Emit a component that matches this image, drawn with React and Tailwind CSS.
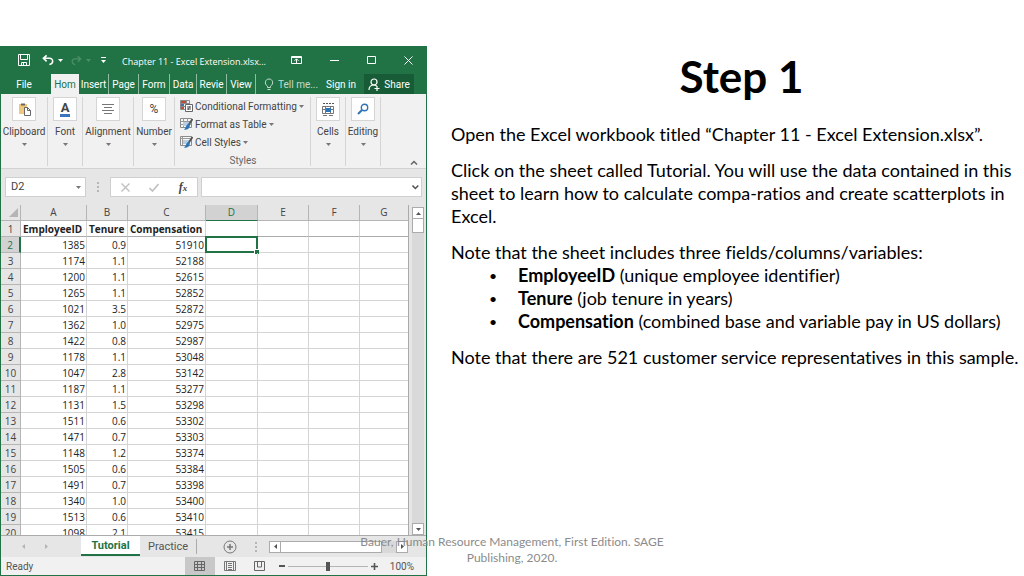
import { useState } from "react"

const rows = [
    ["1385", "0.9", "51910"],
    ["1174", "1.1", "52188"],
    ["1200", "1.1", "52615"],
    ["1265", "1.1", "52852"],
    ["1021", "3.5", "52872"],
    ["1362", "1.0", "52975"],
    ["1422", "0.8", "52987"],
    ["1178", "1.1", "53048"],
    ["1047", "2.8", "53142"],
    ["1187", "1.1", "53277"],
    ["1131", "1.5", "53298"],
    ["1511", "0.6", "53302"],
    ["1471", "0.7", "53303"],
    ["1148", "1.2", "53374"],
    ["1505", "0.6", "53384"],
    ["1491", "0.7", "53398"],
    ["1340", "1.0", "53400"],
    ["1513", "0.6", "53410"],
    ["1098", "2.1", "53415"],
]

const tabs = [
    { name: "Insert", width: "w-[30px]" },
    { name: "Page", width: "w-[30px]" },
    { name: "Form", width: "w-[31px]" },
    { name: "Data", width: "w-[27px]" },
    { name: "Revie", width: "w-[30px]" },
    { name: "View", width: "w-[29px]" },
]

const Caret = ({ className = "" }) => (
    <svg className={`shrink-0 ${className}`} width="5" height="3" viewBox="0 0 5 3" fill="currentColor" aria-hidden="true">
        <path d="M0 0h5L2.5 3z" />
    </svg>
)

const TitleBar = () => (
    <div className="flex h-7 items-center bg-[#217346] pl-[17px] text-white">
        <button aria-label="Save">
            <svg width="12" height="12" viewBox="0 0 12 12" fill="none" stroke="currentColor">
                <path d="M.5.5h11v11H.5zM2.5.5v5h7v-5M3.5 11.500v-3h5v3M5.500 9v2" />
            </svg>
        </button>
        <button aria-label="Undo" className="ml-3 flex items-center gap-1">
            <svg width="12" height="12" viewBox="0 0 13 12" fill="none" stroke="currentColor" strokeWidth="1.700">
                <path d="M5 1L1.500 4.200 5 7.500M1.500 4.200H8c5 0 4.500 6 0 6.600" />
            </svg>
            <Caret />
        </button>
        <button aria-label="Redo" className="ml-2 flex items-center gap-1 text-[#4c8f69]">
            <svg width="11" height="11" viewBox="0 0 13 12" fill="none" stroke="currentColor" strokeWidth="1.500">
                <path d="M8 1l3.500 3.200L8 7.500M11.500 4.200H5c-5 0-4.500 6 0 6.600" />
            </svg>
            <Caret />
        </button>
        <button aria-label="Customize toolbar" className="ml-[10px]">
            <svg width="5" height="6" viewBox="0 0 5 6" fill="currentColor">
                <path d="M0 0h5v1H0zM0 3h5L2.500 6z" />
            </svg>
        </button>
        <span className="ml-4 flex-1 pt-1 font-['Open_Sans',sans-serif] text-[9px] whitespace-nowrap">Chapter 11 - Excel Extension.xlsx...</span>
        <div className="flex items-center gap-7 pr-[13px]">
            <button aria-label="Ribbon display options">
                <svg width="11" height="8" viewBox="0 0 11 8" fill="none" stroke="currentColor">
                    <path d="M.5.5h10v7H.5zM.5 1.500h10M5.500 7V3M3.500 4.800l2-2 2 2" />
                </svg>
            </button>
            <button aria-label="Minimize">
                <svg width="9" height="8" viewBox="0 0 9 8" stroke="currentColor">
                    <path d="M0 4.500h9" />
                </svg>
            </button>
            <button aria-label="Maximize">
                <svg width="9" height="8" viewBox="0 0 9 8" fill="none" stroke="currentColor">
                    <path d="M.5.5h8v7h-8z" />
                </svg>
            </button>
            <button aria-label="Close">
                <svg width="9" height="9" viewBox="0 0 9 9" stroke="currentColor">
                    <path d="M.5.5l8 8M8.500.5l-8 8" />
                </svg>
            </button>
        </div>
    </div>
)

const TabBar = () => (
    <div className="flex h-5 items-stretch bg-[#217346] text-[10px] whitespace-nowrap text-white">
        <button className="w-[50px] pr-1">File</button>
        <button className="w-7 bg-[#f1f1f1] text-[#217346]">Hom</button>
        {tabs.map((tab) => (
            <button key={tab.name} className={`flex shrink-0 items-center justify-center border-r border-[#8fbda2] ${tab.width}`}>
                {tab.name}
            </button>
        ))}
        <button className="ml-2 flex items-center gap-1 text-[#c3dccd]">
            <svg width="10" height="13" viewBox="0 0 10 13" fill="none" stroke="currentColor">
                <path d="M3.500 9.500V8.200C0 6 1 1 5 1s5 5 1.500 7.200v1.300zM3.500 11.500h3" />
            </svg>
            Tell me...
        </button>
        <button className="ml-auto">Sign in</button>
        <button className="mr-3 ml-2 flex w-[50px] items-center justify-center gap-1 bg-[#185c37]">
            <svg width="12" height="13" viewBox="0 0 12 13" fill="none" stroke="currentColor" strokeWidth="1.200">
                <circle cx="6" cy="4" r="3" />
                <path d="M1 12c0-3 2-5 5-5 1 0 2 .4 2.600 1M9 8v5M6.500 10.500h5" />
            </svg>
            Share
        </button>
    </div>
)

const RibbonGroup = ({ label, width, children }) => (
    <button className={`flex h-[69px] shrink-0 flex-col items-center border-r border-[#d5d5d5] ${width}`}>
        <span className="flex size-6 shrink-0 items-center justify-center border border-[#d5d5d5] bg-white">
            {children}
        </span>
        <span className="mt-1 leading-[14px] whitespace-nowrap">{label}</span>
        <Caret className="mt-1 text-[#777]" />
    </button>
)

const StyleIcon = ({ kind }) => (
    <svg width="13" height="12" viewBox="0 0 13 12" fill="none" aria-hidden="true">
        {kind === "conditional" ? (
            <>
                <path d="M.5.5h9v9h-9zM.5 3.500h9M.5 6.500h9M3.500.5v9M6.500.5v9" stroke="#8a8a8a" />
                <path d="M1 1h5v2H1zM1 7h3v2H1z" fill="#c5483b" />
                <path d="M1 4h3v2H1z" fill="#4472a8" />
                <path d="M5.500 4.500h7v7h-7z" fill="#fff" stroke="#666" />
                <path d="M7 7h4M7 9h4M10 6l-2 4" stroke="#555" />
            </>
        ) : (
            <>
                <path d="M.5.5h11v9H.5z" fill="#f7f7f7" stroke="#8a8a8a" />
                <path d={kind === "table" ? "M.5 3.500h11M.5 6.500h11M3.500.5v9M7.500.5v9" : "M.5 2.500h11M2.500.5v9"} stroke="#9a9a9a" />
                <path d="M3 4h6v4H3z" fill="#b7cde4" />
                <path d="M12.500 1L8.500 7" stroke="#555" strokeWidth="2" />
                <path d="M8 6c2 0 2.500 2 1 4-1 1.500-3 2-5 1.500C6 10 6 7 8 6z" fill="#2e75b6" />
            </>
        )}
    </svg>
)

const Ribbon = () => (
    <div className="flex h-[75px] items-start border-b border-[#d2d2d2] bg-[#f1f1f1] pt-[3px] text-[10px] text-[#444]">
        <RibbonGroup label="Clipboard" width="w-[47px]">
            <svg width="13" height="14" viewBox="0 0 13 14" fill="none">
                <path d="M1 2h8v10H1z" fill="#edc87e" />
                <path d="M3 1.500h4v2H3z" fill="#666" />
                <path d="M6.500 5.500h3l3 3v5h-6z" fill="#fff" stroke="#666" />
                <path d="M9.500 5.500v3h3" stroke="#666" />
            </svg>
        </RibbonGroup>
        <RibbonGroup label="Font" width="w-[35px]">
            <span className="border-b-3 border-[#3b76bd] px-px text-[13px] leading-[13px] font-bold">A</span>
        </RibbonGroup>
        <RibbonGroup label="Alignment" width="w-[51px]">
            <svg width="12" height="10" viewBox="0 0 12 10" stroke="#777">
                <path d="M0 .5h12M2 3.500h8M0 6.500h12M2 9.500h8" />
            </svg>
        </RibbonGroup>
        <RibbonGroup label="Number" width="w-[41px]">
            <span className="text-xs">%</span>
        </RibbonGroup>
        <div className="flex h-[69px] min-w-0 flex-1 flex-col border-r border-[#d5d5d5] pl-[5px] whitespace-nowrap">
            <button className="flex h-[18px] shrink-0 items-center gap-[2px]">
                <StyleIcon kind="conditional" />
                Conditional Formatting
                <Caret className="text-[#777]" />
            </button>
            <button className="flex h-[18px] shrink-0 items-center gap-[2px]">
                <StyleIcon kind="table" />
                Format as Table
                <Caret className="text-[#777]" />
            </button>
            <button className="flex h-[18px] shrink-0 items-center gap-[2px]">
                <StyleIcon kind="cell" />
                Cell Styles
                <Caret className="text-[#777]" />
            </button>
            <span className="pr-1 text-center leading-[20px] text-[#666]">Styles</span>
        </div>
        <RibbonGroup label="Cells" width="w-[35px]">
            <svg width="13" height="14" viewBox="0 0 13 14" fill="none">
                <path d="M1 1.500h11" stroke="#555" strokeDasharray="2 1" />
                <path d="M.5 4.500h11v7H.5zM.5 7.500h11M3.500 4.500v7M8.500 4.500v7M1 13.500h4M7 13.500h4" stroke="#777" />
                <path d="M4 6h5v4H4z" fill="#2e75b6" />
            </svg>
        </RibbonGroup>
        <RibbonGroup label="Editing" width="w-[35px]">
            <svg width="12" height="12" viewBox="0 0 12 12" fill="none" stroke="#2e75b6">
                <circle cx="7.500" cy="4.500" r="3.200" strokeWidth="1.400" />
                <path d="M5 7L1 11" strokeWidth="2" />
            </svg>
        </RibbonGroup>
        <button aria-label="Collapse the ribbon" className="flex w-[45px] shrink-0 justify-end self-end pr-2 pb-[3px]">
            <svg width="8" height="5" viewBox="0 0 8 5" fill="none" stroke="#666" strokeWidth="1.500">
                <path d="M1 4.500l3-3 3 3" />
            </svg>
        </button>
    </div>
)

const FormulaBar = () => (
    <div className="flex h-9 items-center bg-[#e6e6e6] px-1 text-[#444]">
        <label className="flex h-5 w-[81px] items-center border border-[#d0d0d0] bg-white pr-1">
            <input aria-label="Name box" defaultValue="D2" className="w-full min-w-0 pl-[5px] text-[11px] outline-none" />
            <Caret className="text-[#777]" />
        </label>
        <svg className="mx-[11px]" width="2" height="10" viewBox="0 0 2 10" fill="#b5b5b5" aria-hidden="true">
            <path d="M0 0h2v2H0zM0 4h2v2H0zM0 8h2v2H0z" />
        </svg>
        <div className="flex h-5 w-[88px] items-center justify-around border border-[#d0d0d0] bg-white">
            <button aria-label="Cancel">
                <svg width="9" height="9" viewBox="0 0 9 9" stroke="#c0c0c0" strokeWidth="1.400">
                    <path d="M.5.5l8 8M8.500.5l-8 8" />
                </svg>
            </button>
            <button aria-label="Enter">
                <svg width="10" height="9" viewBox="0 0 10 9" fill="none" stroke="#c0c0c0" strokeWidth="1.600">
                    <path d="M.5 5l3 3 6-7" />
                </svg>
            </button>
            <button className="font-['Liberation_Serif',serif] text-xs leading-3 font-bold italic">
                f<span className="text-[9px]">x</span>
            </button>
        </div>
        <label className="ml-[3px] flex h-5 flex-1 items-center border border-[#d0d0d0] bg-white pr-[2px]">
            <input aria-label="Formula" className="w-full min-w-0 text-[11px] outline-none" />
            <svg width="7" height="5" viewBox="0 0 7 5" fill="none" stroke="#555" strokeWidth="1.600">
                <path d="M.5.500l3 3 3-3" />
            </svg>
        </label>
    </div>
)

const Sheet = () => (
    <div className="flex h-[330px] overflow-hidden bg-[#e6e6e6]">
        <div className="min-w-0 flex-1 overflow-hidden border-r border-[#ababab]">
            <table className="w-full table-fixed border-separate border-spacing-0 bg-white font-['Open_Sans',sans-serif] text-[10px] leading-[13px] text-[#222]">
                <colgroup>
                    <col className="w-5" />
                    <col className="w-[66px]" />
                    <col className="w-[41px]" />
                    <col className="w-[78px]" />
                    <col className="w-[52px]" />
                    <col className="w-[51px]" />
                    <col className="w-[51px]" />
                    <col />
                </colgroup>
                <thead>
                    <tr className="h-4 bg-[#e6e6e6] text-[#444]">
                        <th className="border-r border-b border-[#b5b5b5] p-0">
                            <svg className="mr-[2px] ml-auto" width="9" height="9" viewBox="0 0 9 9" fill="#b5b5b5" aria-hidden="true">
                                <path d="M9 0v9H0z" />
                            </svg>
                        </th>
                        {["A", "B", "C", "D", "E", "F", "G"].map((letter) => (
                            <th
                                key={letter}
                                className={letter === "D"
                                    ? "border-r border-b border-r-[#b5b5b5] border-b-[#217346] bg-[#d2d2d2] p-0 font-normal text-[#217346]"
                                    : "border-r border-b border-[#b5b5b5] p-0 font-normal last:border-r-0"}
                            >
                                {letter}
                            </th>
                        ))}
                    </tr>
                </thead>
                <tbody>
                    <tr className="h-4 font-bold">
                        <th className="border-r border-b border-[#b5b5b5] bg-[#e6e6e6] p-0 pt-[2px] font-normal text-[#444]">1</th>
                        <td className="border-r border-b border-r-[#d4d4d4] border-b-[#ababab] p-0 pt-[2px] pl-[2px] whitespace-nowrap">EmployeeID</td>
                        <td className="border-r border-b border-r-[#d4d4d4] border-b-[#ababab] p-0 pt-[2px] pl-[2px] whitespace-nowrap">Tenure</td>
                        <td className="border-r border-b border-r-[#d4d4d4] border-b-[#ababab] p-0 pt-[2px] pl-[2px] whitespace-nowrap">Compensation</td>
                        {["D", "E", "F", "G"].map((letter) => (
                            <td key={letter} className="border-r border-b border-r-[#d4d4d4] border-b-[#ababab] p-0 last:border-r-0"></td>
                        ))}
                    </tr>
                    {rows.map((row, index) => (
                        <tr key={row[0]} className="h-4">
                            <th className={index === 0
                                ? "border-r-2 border-b border-r-[#217346] border-b-[#b5b5b5] bg-[#d2d2d2] p-0 pt-[2px] font-normal text-[#217346]"
                                : "border-r border-b border-[#b5b5b5] bg-[#e6e6e6] p-0 pt-[2px] font-normal text-[#444]"}
                            >
                                {index + 2}
                            </th>
                            {row.map((value, column) => (
                                <td key={column} className="border-r border-b border-[#d4d4d4] p-0 pt-[2px] pr-px text-right">{value}</td>
                            ))}
                            <td className="relative border-r border-b border-[#d4d4d4] p-0">
                                {index === 0 && (
                                    <div className="absolute -inset-px border-2 border-[#217346]">
                                        <span className="absolute -right-[3px] -bottom-[3px] size-[5px] border-t border-l border-white bg-[#217346]"></span>
                                    </div>
                                )}
                            </td>
                            <td className="border-r border-b border-[#d4d4d4] p-0"></td>
                            <td className="border-r border-b border-[#d4d4d4] p-0"></td>
                            <td className="border-b border-[#d4d4d4] p-0"></td>
                        </tr>
                    ))}
                </tbody>
            </table>
        </div>
        <div className="mt-[2px] mr-[2px] ml-[3px] flex w-3 shrink-0 flex-col bg-[#d9d9d9]">
            <button aria-label="Scroll up" className="flex h-3 items-center justify-center border border-[#ababab] bg-white text-[#555]">
                <Caret className="rotate-180" />
            </button>
            <div className="h-[14px] border border-t-0 border-[#ababab] bg-white"></div>
            <button aria-label="Scroll down" className="mt-auto flex h-3 items-center justify-center border border-[#ababab] bg-white text-[#555]">
                <Caret />
            </button>
        </div>
    </div>
)

const SheetTabs = () => (
    <div className="flex h-[22px] items-stretch border-t border-[#ababab] bg-[#e6e6e6] text-[11px] text-[#555]">
        <div className="flex w-20 items-center justify-center gap-[18px] pr-3 text-[#b5b5b5]">
            <button aria-label="Previous sheet" className="rotate-90"><Caret /></button>
            <button aria-label="Next sheet" className="-rotate-90"><Caret /></button>
        </div>
        <button className="mb-px w-[59px] border-b-2 border-[#217346] bg-white pt-[2px] font-bold text-[#217346]">Tutorial</button>
        <button className="my-[3px] w-[57px] border-r border-[#ababab]">Practice</button>
        <button aria-label="New sheet" className="ml-[26px]">
            <svg width="14" height="14" viewBox="0 0 14 14" fill="none" stroke="#777">
                <circle cx="7" cy="7" r="6" />
                <path d="M4 7h6M7 4v6" strokeWidth="1.500" />
            </svg>
        </button>
        <svg className="ml-[18px] self-center" width="2" height="10" viewBox="0 0 2 10" fill="#b5b5b5" aria-hidden="true">
            <path d="M0 0h2v2H0zM0 4h2v2H0zM0 8h2v2H0z" />
        </svg>
        <div className="my-auto mr-[18px] ml-3 flex h-3 flex-1 bg-[#d9d9d9] text-[#555]">
            <button aria-label="Scroll left" className="flex w-3 items-center justify-center border border-[#ababab] bg-white">
                <Caret className="rotate-90" />
            </button>
            <div className="mr-[14px] flex-1 border border-l-0 border-[#ababab] bg-white"></div>
            <button aria-label="Scroll right" className="flex w-3 items-center justify-center border border-[#ababab] bg-white">
                <Caret className="-rotate-90" />
            </button>
        </div>
    </div>
)

const StatusBar = () => {

    const [zoom, setZoom] = useState(50)

    return (
        <div className="flex h-[18px] items-center bg-[#f1f1f1] text-[10px] text-[#555]">
            <span className="flex-1 pl-[5px]">Ready</span>
            <button aria-label="Normal view" className="flex h-full w-[30px] items-center justify-center bg-[#c8c8c8]">
                <svg width="11" height="10" viewBox="0 0 11 10" fill="none" stroke="#666">
                    <path d="M.5.5h10v9H.5zM.5 3.500h10M.5 6.500h10M3.500.5v9M7.500.5v9" />
                </svg>
            </button>
            <button aria-label="Page layout view" className="flex w-[30px] justify-center">
                <svg width="12" height="10" viewBox="0 0 12 10" fill="none" stroke="#777">
                    <path d="M.5.5h11v9H.5zM2.500.5v9M9.500.5v9M4 2.500h4M4 4.500h4M4 6.500h4M4 8.500h4" />
                </svg>
            </button>
            <button aria-label="Page break view" className="flex w-[30px] justify-center">
                <svg width="11" height="10" viewBox="0 0 11 10" fill="none" stroke="#666">
                    <path d="M.5.5h10v9H.5zM3.500.5v5.500h4V.5" />
                </svg>
            </button>
            <button aria-label="Zoom out" className="ml-1">
                <svg width="6" height="6" viewBox="0 0 6 6" stroke="#555" strokeWidth="2">
                    <path d="M0 3h6" />
                </svg>
            </button>
            <input
                type="range"
                aria-label="Zoom"
                value={zoom}
                onChange={(e) => setZoom(Number(e.target.value))}
                className="mx-[3px] h-[9px] w-20 appearance-none bg-[linear-gradient(#b5b5b5,#b5b5b5)] bg-[length:100%_1px] bg-center bg-no-repeat [&::-webkit-slider-thumb]:h-[9px] [&::-webkit-slider-thumb]:w-1 [&::-webkit-slider-thumb]:appearance-none [&::-webkit-slider-thumb]:bg-[#555]"
            />
            <button aria-label="Zoom in">
                <svg width="7" height="7" viewBox="0 0 7 7" stroke="#555" strokeWidth="1.600">
                    <path d="M0 3.500h7M3.500 0v7" />
                </svg>
            </button>
            <span className="mr-3 ml-3">100%</span>
        </div>
    )
}

const App = () => {
    return (
        <div className="relative min-h-screen overflow-hidden bg-white font-[Lato,sans-serif] text-black [font-variant-ligatures:none]">
            <main className="grid grid-cols-[427fr_597fr] items-start pt-[46px]">
                <section className="min-w-0 border border-t-0 border-b-2 border-[#217346] font-[Roboto,sans-serif]">
                    <TitleBar />
                    <TabBar />
                    <Ribbon />
                    <FormulaBar />
                    <Sheet />
                    <SheetTabs />
                    <StatusBar />
                </section>
                <article className="pl-6 text-lg leading-[23px]">
                    <h1 className="pl-2 text-center text-[44px] leading-[60px] font-bold">Step 1</h1>
                    <p className="mt-[17px] whitespace-nowrap">Open the Excel workbook titled “Chapter 11 - Excel Extension.xlsx”.</p>
                    <p className="mt-[13px]">
                        Click on the sheet called Tutorial. You will use the data contained in this sheet to learn how to calculate compa-ratios and create scatterplots in Excel.
                    </p>
                    <p className="mt-[13px]">Note that the sheet includes three fields/columns/variables:</p>
                    <ul className="pl-[38px]">
                        <li className="flex whitespace-pre">
                            <span className="w-[29px] text-sm leading-[23px]">•</span>
                            <b>EmployeeID</b> (unique employee identifier)
                        </li>
                        <li className="flex whitespace-pre">
                            <span className="w-[29px] text-sm leading-[23px]">•</span>
                            <b>Tenure</b> (job tenure in years)
                        </li>
                        <li className="flex whitespace-pre">
                            <span className="w-[29px] text-sm leading-[23px]">•</span>
                            <b>Compensation</b> (combined base and variable pay in US dollars)
                        </li>
                    </ul>
                    <p className="mt-[13px] whitespace-nowrap">Note that there are 521 customer service representatives in this sample.</p>
                </article>
            </main>
            <footer className="absolute inset-x-0 bottom-[11px] mx-auto w-[320px] text-center text-xs leading-4 text-[#8b8b8b]">
                Bauer, Human Resource Management, First Edition. SAGE Publishing, 2020.
            </footer>
        </div>
    )
}

export default App
